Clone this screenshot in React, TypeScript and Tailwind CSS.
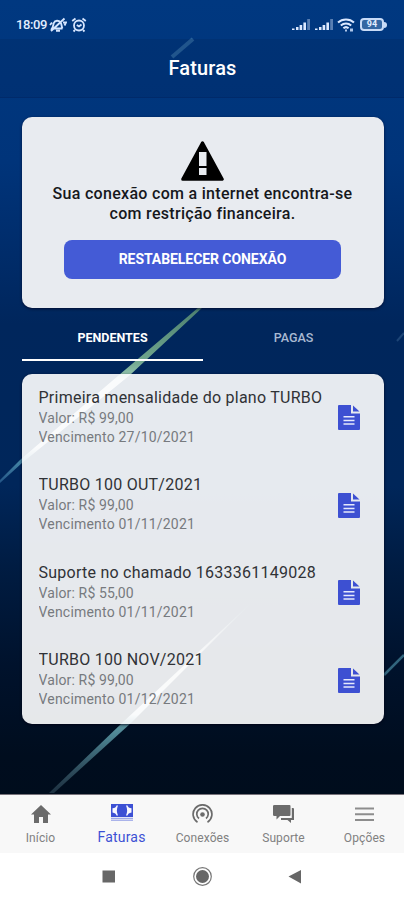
import type { ReactNode } from 'react';

const invoices = [
  { title: 'Primeira mensalidade do plano TURBO', value: '99,00', due: '27/10/2021' },
  { title: 'TURBO 100 OUT/2021', value: '99,00', due: '01/11/2021' },
  { title: 'Suporte no chamado 1633361149028', value: '55,00', due: '01/11/2021' },
  { title: 'TURBO 100 NOV/2021', value: '99,00', due: '01/12/2021' },
];

function Backdrop() {
  return (
    <svg className="absolute inset-0 h-full w-full" viewBox="0 0 404 900" preserveAspectRatio="none">
      <defs>
        <linearGradient id="bg" x1="0" y1="0" x2="0" y2="1">
          <stop offset="0" stopColor="#003880" />
          <stop offset=".18" stopColor="#00347a" />
          <stop offset=".27" stopColor="#002d6c" />
          <stop offset=".36" stopColor="#00265c" />
          <stop offset=".54" stopColor="#00265a" />
          <stop offset=".63" stopColor="#001c42" />
          <stop offset=".74" stopColor="#00122c" />
          <stop offset=".84" stopColor="#000d1e" />
          <stop offset="1" stopColor="#000c1a" />
        </linearGradient>
        <linearGradient id="green" x1="0" y1="308" x2="0" y2="482" gradientUnits="userSpaceOnUse">
          <stop offset="0" stopColor="#4d8070" />
          <stop offset=".3" stopColor="#6fa58c" />
          <stop offset=".38" stopColor="#8fc0aa" />
          <stop offset=".42" stopColor="#ffffff" />
          <stop offset=".8" stopColor="#ffffff" />
          <stop offset=".87" stopColor="#4689a8" />
          <stop offset="1" stopColor="#245687" />
        </linearGradient>
        <linearGradient id="teal" x1="0" y1="605" x2="0" y2="793" gradientUnits="userSpaceOnUse">
          <stop offset="0" stopColor="#ffffff" stopOpacity=".1" />
          <stop offset=".3" stopColor="#fff6e8" />
          <stop offset=".58" stopColor="#ffffff" />
          <stop offset=".62" stopColor="#5f98a4" />
          <stop offset=".7" stopColor="#4c8391" />
          <stop offset="1" stopColor="#3b5666" stopOpacity=".5" />
        </linearGradient>
      </defs>
      <rect width="404" height="900" fill="url(#bg)" />
      <path d="M199 307L203 307L130 375L22 463L0 483L0 480L20 460L119 375Z" fill="url(#green)" />
      <path d="M250 604L131 723L54 793L49 793L122 723Z" fill="url(#teal)" />
      <path d="M404 655L384 675" stroke="#32657d" strokeWidth="2.500" />
      <path d="M193 39L172 57" stroke="#2a639c" strokeWidth="4" />
      <path d="M404 333L397 341" stroke="#1d4576" strokeWidth="2" />
    </svg>
  );
}

function Signal() {
  return (
    <svg className="h-3 w-[19px]" viewBox="0 0 19 12" fill="#dce9ff">
      <path d="M0 9.5h2.5V11H0zM4 8h2.5v3H4zM7.6 6h2.6v5H7.6zM11.4 3.5H14V11h-2.6z" />
      <path d="M15.2 0H18v11h-2.8z" opacity=".4" />
    </svg>
  );
}

function StatusBar() {
  return (
    <div className="flex h-[39px] items-center pt-[10px] pl-4 pr-[17px] text-[#e2edff]">
      <span className="w-[33px] whitespace-nowrap text-[13px] leading-none font-medium tracking-[-0.4px]">18:09</span>
      <svg className="h-4 w-[18px]" viewBox="0 0 18 16" fill="none" stroke="#d5e5ff" strokeWidth="1.9">
        <path d="M13.500 11.500c-1-1.400-.5-4-2-6.100C9.700 3.100 6 3.100 4.800 6c-.6 1.800-.6 3.800-1.800 5.500h10.500M7 13.800h4M2 14L15.500 1.500M1 8l2-2.500M14 5.500h3l-1.500 3" />
      </svg>
      <svg className="ml-[4px] h-4 w-4" viewBox="0 0 16 16" fill="none" stroke="#d5e5ff" strokeWidth="1.800">
        <circle cx="8" cy="8.500" r="5" />
        <path d="M1.200 4L4.500 1.500M11.500 1.500L14.800 4M4 13l-1.500 1.500M12 13l1.500 1.500M5.800 8L8 9.500 10.500 7.500" />
      </svg>
      <div className="ml-auto flex items-center">
        <Signal />
        <span className="w-[4px]" />
        <Signal />
        <svg className="ml-[3px] h-[14px] w-[18px]" viewBox="0 0 18 14" fill="none" stroke="#dce9ff" strokeWidth="2">
          <path d="M1 4.500C5.300.4 12.700.4 17 4.500M3.800 7.500c3-2.700 7.400-2.700 10.400 0M6.400 10.300c1.500-1.400 3.700-1.400 5.200 0" />
          <path d="M8 11.500h2v2H8zM13 10.500h3v3h-3z" fill="#aec6ea" stroke="none" />
        </svg>
        <div className="ml-[5px] flex h-[13px] w-[24px] items-center justify-center rounded-[4px] border-2 border-[#c8dbf7] bg-[#3467a3] text-[9px] leading-none font-bold">94</div>
        <span className="h-[6px] w-[3px] rounded-r-sm bg-[#c8dbf7]" />
      </div>
    </div>
  );
}

function NavItem({ label, active, children }: { label: string; active?: boolean; children: ReactNode }) {
  return (
    <div className={active ? 'flex w-[81px] shrink-0 flex-col items-center text-[#3c50d4]' : 'flex w-[81px] shrink-0 flex-col items-center text-[#6b6b6b]'}>
      <div className={active ? 'flex h-[33px] items-center justify-center pt-[2px]' : 'flex h-[35px] items-center justify-center pt-[3px]'}>{children}</div>
      <span className={active ? 'text-[14px] leading-[19px] tracking-[0.2px]' : 'text-[12px] leading-[17px] tracking-[0.1px] text-[#818181]'}>{label}</span>
    </div>
  );
}

export default function App() {
  return (
    <div className="relative h-[900px] w-[404px] overflow-hidden font-[Roboto,sans-serif]">
      <Backdrop />
      <div className="relative flex h-full flex-col">
        <StatusBar />
        <header className="flex h-[59px] items-center justify-center border-b border-[#002866]/70 bg-[#002050]/20 pl-px text-[20px] font-medium tracking-[0.15px] text-white">
          Faturas
        </header>

        <main className="flex h-[696px] flex-col pt-[19px] pr-[20px] pl-[22px]">
          <section className="flex h-[191px] flex-col items-center rounded-[10px] bg-[#e8ebf0] pt-6 pr-px shadow-[0_1px_3px_rgba(0,0,30,0.7)]">
            <svg className="h-10 w-[43px]" viewBox="0 0 43 40">
              <path d="M21.500 1.800L41.300 38.200H1.700Z" fill="#000" stroke="#000" strokeWidth="3" strokeLinejoin="round" />
              <path d="M18 11h7.500v14H18zM18 27h7.500v7H18z" fill="#e8ebf0" />
            </svg>
            <p className="mt-[3px] text-center text-[16px] leading-[20px] font-medium whitespace-nowrap tracking-[0.3px] text-[#16181c]">
              Sua conexão com a internet encontra-se
              <br />
              com restrição financeira.
            </p>
            <button className="mt-4 h-[39px] w-[277px] rounded-lg bg-[#445bd6] text-[14px] font-bold tracking-[-0.07px] text-white">RESTABELECER CONEXÃO</button>
          </section>

          <div className="flex h-[53px]">
            <div className="flex w-[181px] justify-center border-b-2 border-white pt-[21px] text-[12.5px] leading-[18px] font-bold text-white">PENDENTES</div>
            <div className="flex w-[181px] justify-center pt-[21px] text-[12.5px] leading-[18px] font-medium text-[#a9b9d2]">PAGAS</div>
          </div>

          <section className="mt-[13px] h-[350px] rounded-[10px] bg-[#fafbfc]/[0.92] shadow-[0_1px_3px_rgba(0,0,20,0.8)]">
            {invoices.map((item, i) => (
              <div key={i} className="flex h-[87.5px] items-center pr-[24px] pl-[16.5px]">
                <div className="h-[62px] w-[285px] overflow-hidden whitespace-nowrap">
                  <div className="text-[16px] leading-[22px] tracking-[0.25px] text-[#303236]">{item.title}</div>
                  <div className="text-[14px] leading-[19px] tracking-[0.13px] text-[#777a7e]">Valor: R$ {item.value}</div>
                  <div className="text-[14px] leading-[19px] tracking-[0.2px] text-[#777a7e]">Vencimento {item.due}</div>
                </div>
                <svg className="ml-auto h-[25px] w-[22px]" viewBox="0 0 22 25">
                  <path d="M1 0H13v8.500h9V24q0 1-1 1H1q-1 0-1-1V1Q0 0 1 0Z" fill="#3d50d2" />
                  <path d="M15 .5L21.500 6.500H15Z" fill="#3d50d2" />
                  <path d="M5.500 11.700h11M5.500 15.400h11M5.500 19h11" stroke="#e6e9fc" strokeWidth="1.500" />
                </svg>
              </div>
            ))}
          </section>
        </main>

        <nav className="flex h-[59px] justify-center border-t border-[#77727a] bg-[#f8f8f8] pl-px">
          <NavItem label="Início">
            <svg className="h-[18px] w-[20px]" viewBox="0 0 20 18" fill="currentColor"><path d="M10 0L20 9.500H17V18H12V12H8V18H3V9.500H0Z" /></svg>
          </NavItem>
          <NavItem label="Faturas" active>
            <svg className="h-[17px] w-[22px]" viewBox="0 0 22 17">
              <path d="M0 0h22v13H0z" fill="#3c50d4" />
              <path d="M7 1.500H5.500Q5 4 1.500 4.300v4.200Q5 9 5.500 11.500H7Q4.800 6.500 7 1.500ZM15 1.500h1.500Q17 4 20.500 4.300v4.200Q17 9 16.500 11.500H15Q17.200 6.500 15 1.500Z" fill="#f8f8ff" />
              <path d="M0 14.300h22M0 16.200h22" stroke="#8794e4" />
            </svg>
          </NavItem>
          <NavItem label="Conexões">
            <svg className="h-[20px] w-[21px]" viewBox="0 0 21 20" fill="none" stroke="currentColor" strokeWidth="1.700">
              <path d="M5.500 18.200a9.400 9.400 0 1 1 10 0M7 14.500a5.700 5.700 0 1 1 7 0" />
              <circle cx="10.500" cy="10.500" r="2.300" fill="currentColor" stroke="none" />
            </svg>
          </NavItem>
          <NavItem label="Suporte">
            <svg className="h-[18px] w-[21px]" viewBox="0 0 21 18" fill="currentColor">
              <path d="M1.500 0h15q1 0 1 1v9q0 1-1 1H7L3.500 14.500V11H1.500Q0 11 0 10V1q0-1 1.500-1Z" />
              <path d="M18.800 3H20q1 0 1 1v11h-3v3L14.500 15H8v-2h10.800Z" />
            </svg>
          </NavItem>
          <NavItem label="Opções">
            <svg className="h-[16px] w-[19px]" viewBox="0 0 19 16"><path d="M0 2.500h19M0 8.200h19M0 13.900h19" stroke="#8d8d8d" strokeWidth="2" /></svg>
          </NavItem>
        </nav>
        <div className="flex h-[47px] justify-center bg-white pt-[14px]">
          <svg className="h-5 w-[202px]" viewBox="0 0 202 20" fill="#676767">
            <path d="M1.500 3.500h12.500v12H1.500zM187.500 9.500L200 3v13.500Z" />
            <circle cx="101.500" cy="9.500" r="6.500" />
            <circle cx="101.500" cy="9.500" r="8.800" fill="none" stroke="#777" strokeWidth="1.200" />
          </svg>
        </div>
      </div>
    </div>
  );
}
